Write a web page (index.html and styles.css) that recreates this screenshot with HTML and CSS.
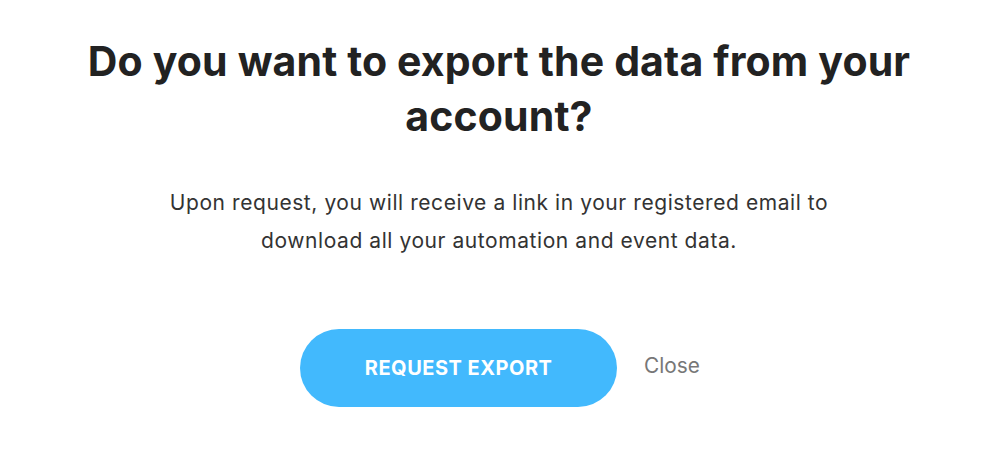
FILE: index.html
```html
<!DOCTYPE html>
<html>
<head>
<meta charset="utf-8">
<link rel="stylesheet" href="styles.css">
</head>
<body>
<div class="modal">
  <h1 class="title">Do you want to export the data from your account?</h1>
  <p class="desc">Upon request, you will receive a link in your registered email to download all your automation and event data.</p>
  <div class="actions">
    <button class="btn-primary">REQUEST EXPORT</button>
    <button class="btn-close">Close</button>
  </div>
</div>
</body>
</html>
```

FILE: styles.css
```css
html, body {
  margin: 0;
  padding: 0;
  background: #ffffff;
}
body {
  font-family: "Inter", "Liberation Sans", sans-serif;
}
.modal {
  display: flex;
  flex-direction: column;
  align-items: center;
  padding-top: 34px;
  padding-left: 4px;
}
.title {
  margin: 0;
  width: 860px;
  text-align: center;
  font-size: 41px;
  letter-spacing: 0.15px;
  line-height: 55px;
  font-weight: 700;
  color: #222222;
}
.desc {
  margin: 40px 0 0 0;
  width: 700px;
  text-align: center;
  font-size: 21px;
  letter-spacing: 0.57px;
  line-height: 38px;
  color: #333333;
}
.actions {
  margin-top: 69px;
  margin-left: 2px;
  display: flex;
  align-items: center;
  gap: 27px;
}
.btn-primary {
  width: 317px;
  height: 78px;
  border: none;
  border-radius: 39px;
  background: #42b9fd;
  color: #ffffff;
  font-family: inherit;
  font-size: 20px;
  letter-spacing: 0.5px;
  font-weight: 700;
}
.btn-close {
  border: none;
  background: none;
  padding: 0;
  font-family: inherit;
  font-size: 20.8px;
  color: #777777;
  margin-top: -6px;
}
```
